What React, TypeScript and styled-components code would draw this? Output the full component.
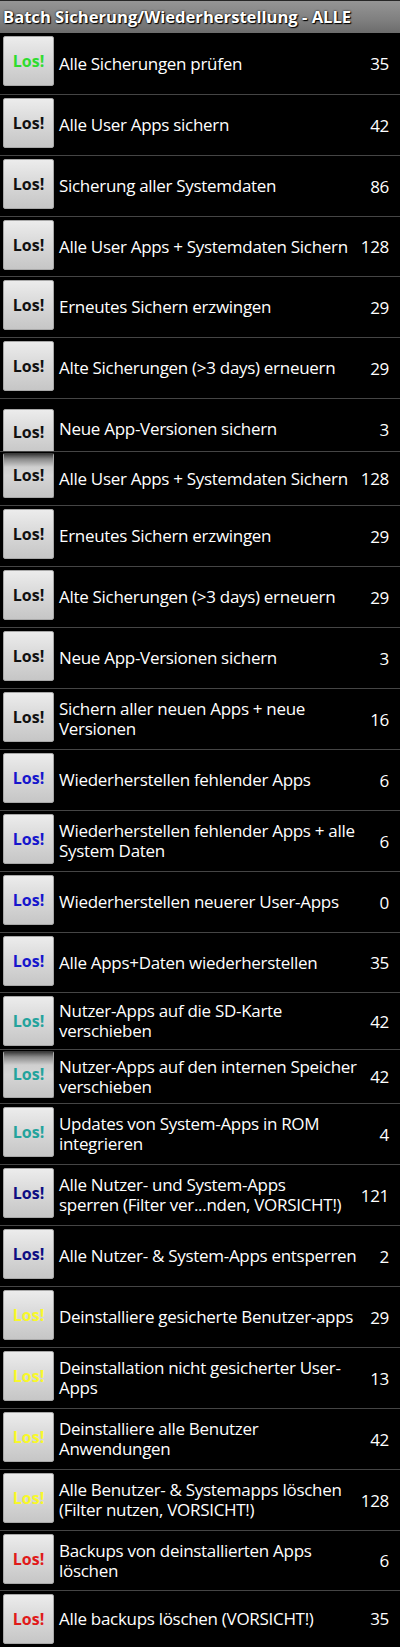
import * as React from 'react'
import styled, { createGlobalStyle, css } from 'styled-components'

type Tone = 'green' | 'black' | 'blue' | 'teal' | 'navy' | 'yellow' | 'red'

const TONES: Record<Tone, string> = {
  green: '#2fdc2f',
  black: '#111111',
  blue: '#1616cc',
  teal: '#24a39c',
  navy: '#0e0e82',
  yellow: '#f8f82a',
  red: '#e01a1a',
}

type Job = {
  lines: string[]
  n: number
  tone: Tone
  h?: number // row height (stitched rows are shorter)
  pt?: number // padding top of row
  mt?: number // button offset
  bh?: number // button height
  shade?: boolean // shadow across the top of the button
}

const JOBS: Job[] = [
  { lines: ['Alle Sicherungen prüfen'], n: 35, tone: 'green', h: 62 },
  { lines: ['Alle User Apps sichern'], n: 42, tone: 'black' },
  { lines: ['Sicherung aller Systemdaten'], n: 86, tone: 'black' },
  { lines: ['Alle User Apps + Systemdaten Sichern'], n: 128, tone: 'black', h: 60 },
  { lines: ['Erneutes Sichern erzwingen'], n: 29, tone: 'black' },
  { lines: ['Alte Sicherungen (>3 days) erneuern'], n: 29, tone: 'black' },
  { lines: ['Neue App-Versionen sichern'], n: 3, tone: 'black', h: 53, pt: 8, mt: 2, bh: 46 },
  { lines: ['Alle User Apps + Systemdaten Sichern'], n: 128, tone: 'black', h: 54, mt: 1, bh: 45, shade: true },
  { lines: ['Erneutes Sichern erzwingen'], n: 29, tone: 'black' },
  { lines: ['Alte Sicherungen (>3 days) erneuern'], n: 29, tone: 'black' },
  { lines: ['Neue App-Versionen sichern'], n: 3, tone: 'black' },
  { lines: ['Sichern aller neuen Apps + neue', 'Versionen'], n: 16, tone: 'black' },
  { lines: ['Wiederherstellen fehlender Apps'], n: 6, tone: 'blue' },
  { lines: ['Wiederherstellen fehlender Apps + alle', 'System Daten'], n: 6, tone: 'blue' },
  { lines: ['Wiederherstellen neuerer User-Apps'], n: 0, tone: 'blue' },
  { lines: ['Alle Apps+Daten wiederherstellen'], n: 35, tone: 'blue', h: 60 },
  { lines: ['Nutzer-Apps auf die SD-Karte', 'verschieben'], n: 42, tone: 'teal', h: 57 },
  { lines: ['Nutzer-Apps auf den internen Speicher', 'verschieben'], n: 42, tone: 'teal', h: 54, mt: 1, bh: 47, shade: true },
  { lines: ['Updates von System-Apps in ROM', 'integrieren'], n: 4, tone: 'teal' },
  { lines: ['Alle Nutzer- und System-Apps', 'sperren (Filter ver...nden, VORSICHT!)'], n: 121, tone: 'navy' },
  { lines: ['Alle Nutzer- & System-Apps entsperren'], n: 2, tone: 'navy' },
  { lines: ['Deinstalliere gesicherte Benutzer-apps'], n: 29, tone: 'yellow' },
  { lines: ['Deinstallation nicht gesicherter User-', 'Apps'], n: 13, tone: 'yellow' },
  { lines: ['Deinstalliere alle Benutzer', 'Anwendungen'], n: 42, tone: 'yellow' },
  { lines: ['Alle Benutzer- & Systemapps löschen', '(Filter nutzen, VORSICHT!)'], n: 128, tone: 'yellow' },
  { lines: ['Backups von deinstallierten Apps', 'löschen'], n: 6, tone: 'red', h: 60 },
  { lines: ['Alle backups löschen (VORSICHT!)'], n: 35, tone: 'red', h: 55 },
]

const Global = createGlobalStyle`
  html, body {
    margin: 0;
    padding: 0;
    background: #000;
  }
`

const Screen = styled.div`
  width: 400px;
  height: 1647px;
  overflow: hidden;
  background: #000;
  font-family: "Open Sans", "Noto Sans", "DejaVu Sans", sans-serif;
`

const TitleBar = styled.div`
  height: 33px;
  box-sizing: border-box;
  border-top: 1px solid #262626;
  background: linear-gradient(#959595, #818181 55%, #6c6c6c);
  display: flex;
  align-items: center;
  padding: 0 0 1px 3px;
  color: #fff;
  font-weight: 700;
  font-size: 16.6px;
  white-space: nowrap;
  text-shadow: 0 0 2px #000, 1px 1px 1px #000;
`

const Row = styled.div<{ $h: number; $pt: number }>`
  height: ${p => p.$h}px;
  box-sizing: border-box;
  display: flex;
  align-items: center;
  padding: ${p => p.$pt}px 11px 0 3px;
  border-bottom: 1px solid #454545;
  overflow: hidden;

  &:last-child {
    border-bottom: none;
  }
`

const GoButton = styled.div<{ $tone: Tone; $mt: number; $bh: number; $shade: boolean }>`
  align-self: flex-start;
  flex: none;
  width: 51px;
  height: ${p => p.$bh}px;
  margin-top: ${p => p.$mt}px;
  box-sizing: border-box;
  border: 1px solid #a8a8a8;
  border-radius: 2px;
  background: linear-gradient(#ececec, #d8d8d8 50%, #c6c6c6);
  display: flex;
  align-items: center;
  justify-content: center;
  padding-bottom: 1px;
  color: ${p => TONES[p.$tone]};
  font-weight: 700;
  font-size: 16px;
  ${p =>
    p.$shade &&
    css`
      border-top-color: #3a3a3a;
      background: linear-gradient(#3c3c3c 0, #8a8a8a 5px, #cfcfcf 13px, #d6d6d6 50%, #c4c4c4);
    `}
`

const Label = styled.div`
  flex: 1;
  min-width: 0;
  margin-left: 5px;
  color: #fff;
  font-size: 17px;
  line-height: 20px;
  letter-spacing: -0.3px;
`

const Line = styled.span`
  display: block;
  white-space: nowrap;
`

const Count = styled.div`
  flex: none;
  margin-left: 6px;
  color: #fff;
  font-size: 17px;
  letter-spacing: -0.3px;
`

export default function App() {
  return (
    <Screen>
      <Global />
      <TitleBar>Batch Sicherung/Wiederherstellung - ALLE</TitleBar>
      {JOBS.map((j, i) => (
        <Row key={i} $h={j.h ?? 61} $pt={j.pt ?? 0}>
          <GoButton $tone={j.tone} $mt={j.mt ?? 3} $bh={j.bh ?? 50} $shade={!!j.shade}>
            Los!
          </GoButton>
          <Label>
            {j.lines.map(l => (
              <Line key={l}>{l}</Line>
            ))}
          </Label>
          <Count>{j.n}</Count>
        </Row>
      ))}
    </Screen>
  )
}
